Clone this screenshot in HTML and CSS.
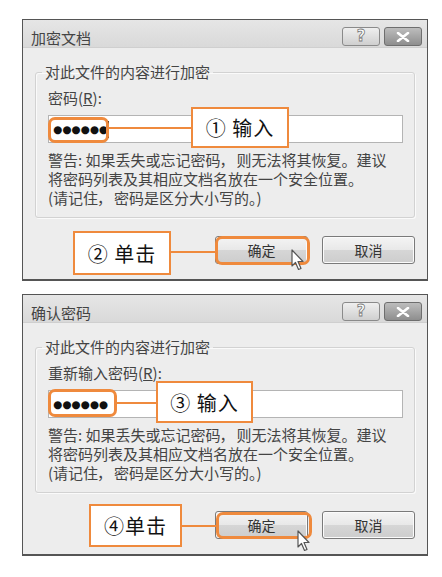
FILE: index.html
```html
<!DOCTYPE html>
<html lang="zh">
<head>
<meta charset="utf-8">
<link rel="stylesheet" href="styles.css">
</head>
<body>
<div class="page">
  <div class="dialog d1">
    <div class="titlebar">
      <span class="title">加密文档</span>
      <div class="caption-btns">
        <span class="cbtn help">?</span>
        <span class="cbtn close"><svg width="16" height="10" viewBox="0 0 16 10"><path d="M3 1 L13 9 M13 1 L3 9" stroke="#fff" stroke-width="2.6" stroke-linecap="round"/></svg></span>
      </div>
    </div>
    <div class="content">
      <fieldset class="group">
        <legend>对此文件的内容进行加密</legend>
        <div class="label">密码(<u>R</u>):</div>
        <div class="input"><span class="dots">●●●●●●</span><span class="caret"></span></div>
        <p class="warn">警告: 如果丢失或忘记密码<span class="comma">，</span>则无法将其恢复。建议<br>将密码列表及其相应文档名放在一个安全位置。<br>(请记住<span class="comma">，</span>密码是区分大小写的。)</p>
      </fieldset>
      <div class="buttons"><span class="btn">确定</span><span class="btn">取消</span></div>
    </div>
    <div class="hl hl1"></div>
    <div class="line line1"></div>
    <div class="callout co1">① 输入</div>
    <div class="callout co2">② 单击</div>
    <div class="hl hl2"></div>
    <div class="line line2"></div>
    <svg class="cursor cur1" width="14" height="22" viewBox="0 0 14 22"><path d="M1 1 L1 17 L4.5 13.5 L7.5 20.5 L10 19.5 L7 12.5 L12 12.5 Z" fill="#fff" stroke="#555" stroke-width="1.2" stroke-linejoin="round"/></svg>
  </div>

  <div class="dialog d2">
    <div class="titlebar">
      <span class="title">确认密码</span>
      <div class="caption-btns">
        <span class="cbtn help">?</span>
        <span class="cbtn close"><svg width="16" height="10" viewBox="0 0 16 10"><path d="M3 1 L13 9 M13 1 L3 9" stroke="#fff" stroke-width="2.6" stroke-linecap="round"/></svg></span>
      </div>
    </div>
    <div class="content">
      <fieldset class="group">
        <legend>对此文件的内容进行加密</legend>
        <div class="label">重新输入密码(<u>R</u>):</div>
        <div class="input"><span class="dots">●●●●●●</span></div>
        <p class="warn">警告: 如果丢失或忘记密码<span class="comma">，</span>则无法将其恢复。建议<br>将密码列表及其相应文档名放在一个安全位置。<br>(请记住<span class="comma">，</span>密码是区分大小写的。)</p>
      </fieldset>
      <div class="buttons"><span class="btn">确定</span><span class="btn">取消</span></div>
    </div>
    <div class="hl hl3"></div>
    <div class="line line3"></div>
    <div class="callout co3">③ 输入</div>
    <div class="callout co4">④单击</div>
    <div class="hl hl4"></div>
    <div class="line line4"></div>
    <svg class="cursor cur2" width="14" height="22" viewBox="0 0 14 22"><path d="M1 1 L1 17 L4.5 13.5 L7.5 20.5 L10 19.5 L7 12.5 L12 12.5 Z" fill="#fff" stroke="#555" stroke-width="1.2" stroke-linejoin="round"/></svg>
  </div>
</div>
</body>
</html>
```

FILE: styles.css
```css
* { box-sizing: border-box; }
html, body { margin: 0; padding: 0; background: #fff; }
body {
  width: 442px;
  height: 577px;
  overflow: hidden;
  font-family: "Noto Sans CJK SC", "Noto Sans", sans-serif;
  color: #333;
}
.page {
  padding: 19px 0 0 22px;
  display: flex;
  flex-direction: column;
  gap: 13px;
}
.dialog {
  position: relative;
  width: 406px;
  background: #ededed;
  border: 1px solid #555;
  border-bottom-width: 2px;
}
.titlebar {
  height: 28px;
  display: flex;
  align-items: center;
  justify-content: space-between;
  padding: 8px 5px 0 8px;
  background: linear-gradient(#e6e6e6, #d9d9d9);
  border-bottom: 1px solid #cfcfcf;
}
.title {
  font-size: 15px;
  line-height: 20px;
  color: #444;
}
.caption-btns {
  display: flex;
  gap: 4px;
  align-self: flex-end;
  margin-bottom: 1px;
}
.cbtn {
  width: 38px;
  height: 19px;
  border-radius: 3px;
  display: flex;
  align-items: center;
  justify-content: center;
}
.help {
  border: 1px solid #8a8a8a;
  background: linear-gradient(#efefef, #cfcfcf);
  color: #fff;
  font-family: "DejaVu Sans", sans-serif;
  font-weight: bold;
  font-size: 15px;
  -webkit-text-stroke: 0.8px #7a7a7a;
  line-height: 17px;
}
.close {
  border: 1px solid #6e6e6e;
  background: linear-gradient(#bdbdbd, #8e8e8e);
}
.content {
  padding: 14px 12px 15px 12px;
}
.group {
  margin: 0;
  border: 1px solid #d2d2d2;
  border-radius: 3px;
  padding: 6px 11px 10px 12px;
  box-shadow: inset 1px 1px 0 #fafafa, 1px 1px 0 #fafafa;
}
.group legend {
  font-size: 15px;
  line-height: 20px;
  padding: 0 3px;
  margin-left: -6px;
  color: #444;
}
.label {
  font-size: 15px;
  line-height: 20px;
  color: #444;
}
.input {
  margin-top: 7px;
  height: 28px;
  background: #fff;
  border: 1px solid #b4b4b4;
  display: flex;
  align-items: center;
  padding-left: 4px;
}
.dots {
  font-family: "DejaVu Sans", sans-serif;
  font-size: 10.5px;
  letter-spacing: 0;
  color: #111;
}
.caret {
  width: 1.5px;
  height: 17px;
  background: #111;
  margin-left: 0;
}
.warn {
  margin: 7px 0 0 0;
  font-size: 15px;
  line-height: 19px;
  color: #444;
}
.comma { margin: 0 2px 0 -1px; }
.buttons {
  margin-top: 18px;
  display: flex;
  justify-content: flex-end;
  gap: 14px;
  padding-right: 0;
}
.btn {
  width: 93px;
  height: 28px;
  border: 1px solid #7a7a7a;
  border-radius: 3px;
  background: linear-gradient(#f4f4f4 0%, #e8e8e8 50%, #d6d6d6 51%, #cdcdcd 100%);
  font-size: 14px;
  color: #333;
  display: flex;
  align-items: center;
  justify-content: center;
  box-shadow: inset 0 0 0 1px #fbfbfb;
}
.hl {
  position: absolute;
  border: 3px solid #ef8a3d;
  border-radius: 7px;
}
.line {
  position: absolute;
  height: 2px;
  background: #ef8a3d;
}
.callout {
  position: absolute;
  background: #fff;
  border: 2.5px solid #ef8a3d;
  font-size: 20px;
  font-weight: 400;
  color: #111;
  display: flex;
  align-items: center;
  justify-content: center;
  white-space: nowrap;
  letter-spacing: 1px;
}
.cursor { position: absolute; }

.hl1 { left: 25px; top: 97px; width: 61px; height: 26px; }
.line1 { left: 86px; top: 107px; width: 82px; }
.co1 { left: 168px; top: 87px; width: 98px; height: 41px; }
.co2 { left: 50px; top: 211px; width: 98px; height: 44px; }
.hl2 { left: 192px; top: 216px; width: 95px; height: 29px; }
.line2 { left: 148px; top: 231px; width: 44px; }
.cur1 { left: 268px; top: 229px; }

.hl3 { left: 25px; top: 94px; width: 69px; height: 28px; }
.line3 { left: 94px; top: 107px; width: 39px; }
.co3 { left: 133px; top: 86px; width: 97px; height: 42px; }
.co4 { left: 66px; top: 209px; width: 93px; height: 43px; }
.hl4 { left: 193px; top: 217px; width: 96px; height: 27px; }
.line4 { left: 159px; top: 230px; width: 34px; }
.cur2 { left: 274px; top: 235px; }
```
